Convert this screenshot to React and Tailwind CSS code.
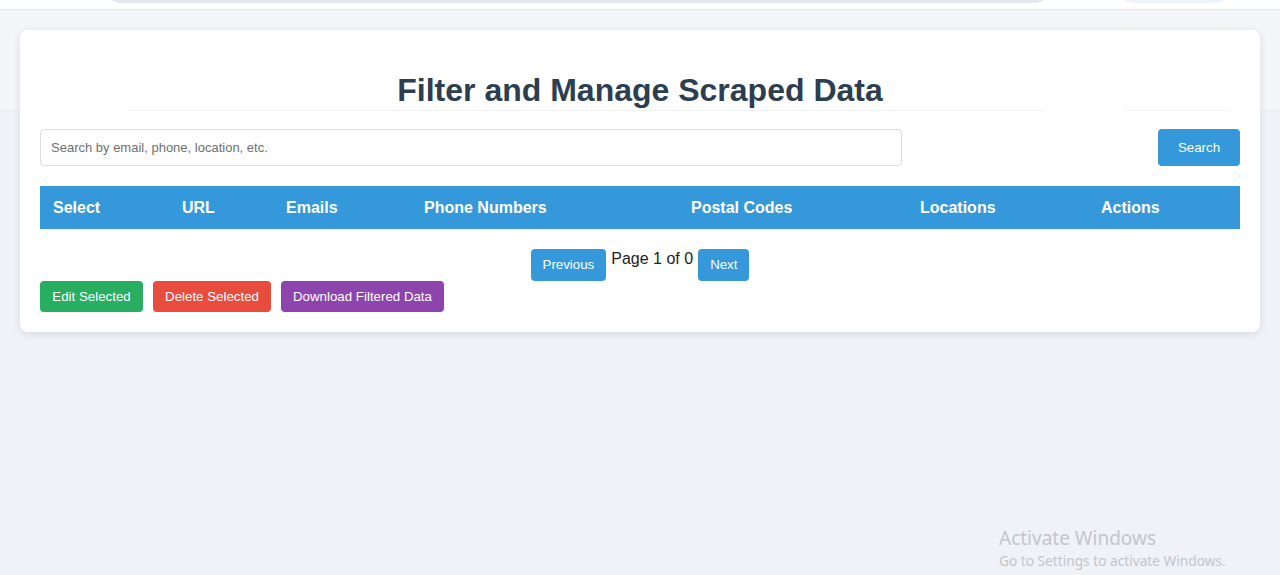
import React, { useState } from "react";

const columns = [
  { label: "Select", w: "w-[129px]" },
  { label: "URL", w: "w-[104px]" },
  { label: "Emails", w: "w-[138px]" },
  { label: "Phone Numbers", w: "w-[267px]" },
  { label: "Postal Codes", w: "w-[229px]" },
  { label: "Locations", w: "w-[181px]" },
  { label: "Actions", w: "" },
];

export default function App() {
  const [query, setQuery] = useState("");
  const page = 1;
  const totalPages = 0;

  return (
    <div
      className="relative min-h-[575px] bg-[#eff2f7] overflow-hidden"
      style={{ fontFamily: '"Liberation Sans", Arial, sans-serif' }}
    >
      {/* top nav remnant */}
      <div className="relative h-[10px] bg-white border-b border-[#e3e6eb]">
        <div className="absolute left-[105px] top-[-30px] w-[946px] h-[33px] rounded-full bg-[#e6e7ea]" />
        <div className="absolute left-[1117px] top-[-30px] w-[115px] h-[33px] rounded-full bg-[#eef3fb]" />
      </div>
      <div className="absolute left-0 right-0 top-[10px] h-[101px] bg-[#f3f5f9] border-b border-[#e8ebf0]" />

      <div className="relative px-5 pt-5">
        <div className="bg-white rounded-lg shadow-[0_2px_8px_rgba(0,0,0,0.1)] px-5 pt-[42px] pb-5">
          <h2 className="text-center text-[32px] font-bold text-[#2c3e50] leading-[37px]">
            Filter and Manage Scraped Data
          </h2>
          <div className="relative h-[20px]">
            <div className="absolute left-[88px] w-[917px] top-[1px] h-px bg-[#f2f3f5]" />
            <div className="absolute left-[1085px] w-[105px] top-[1px] h-px bg-[#f2f3f5]" />
          </div>

          <div className="flex justify-between items-center">
            <input
              value={query}
              onChange={(e) => setQuery(e.target.value)}
              placeholder="Search by email, phone, location, etc."
              className="w-[862px] h-[37px] px-[10px] text-[13px] border border-[#dcdcdc] rounded outline-none placeholder:text-[#6f6f6f]"
            />
            <button className="w-[82px] h-[37px] bg-[#3498db] text-white text-[13.3px] rounded">
              Search
            </button>
          </div>

          <table className="w-full mt-5 border-collapse">
            <thead>
              <tr className="bg-[#3498db] text-white h-[43px]">
                {columns.map((c) => (
                  <th key={c.label} className={`${c.w} px-[13px] text-left text-[16px] font-bold`}>
                    {c.label}
                  </th>
                ))}
              </tr>
            </thead>
            <tbody />
          </table>

          <div className="flex justify-center items-start gap-[5px] mt-5 h-[32px]">
            <button className="h-[32px] px-3 bg-[#3498db] text-white text-[13.3px] rounded">
              Previous
            </button>
            <span className="text-[16px] text-[#222] leading-[18px] pt-[1px]">
              Page {page} of {totalPages}
            </span>
            <button className="h-[32px] px-3 bg-[#3498db] text-white text-[13.3px] rounded">
              Next
            </button>
          </div>

          <div className="flex gap-[10px]">
            <button className="w-[103px] h-[31px] bg-[#27ae60] text-white text-[13.3px] rounded">
              Edit Selected
            </button>
            <button className="w-[118px] h-[31px] bg-[#e74c3c] text-white text-[13.3px] rounded">
              Delete Selected
            </button>
            <button className="w-[163px] h-[31px] bg-[#8e44ad] text-white text-[13.3px] rounded">
              Download Filtered Data
            </button>
          </div>
        </div>
      </div>

      {/* OS watermark */}
      <div
        className="absolute left-[999px] top-[526px] text-[#c3c6cb]"
        style={{ fontFamily: '"Noto Sans", "Open Sans", sans-serif' }}
      >
        <div className="text-[19px] leading-[24px]">Activate Windows</div>
        <div className="text-[13.7px] leading-[20px] mt-[1px]">Go to Settings to activate Windows.</div>
      </div>
    </div>
  );
}
